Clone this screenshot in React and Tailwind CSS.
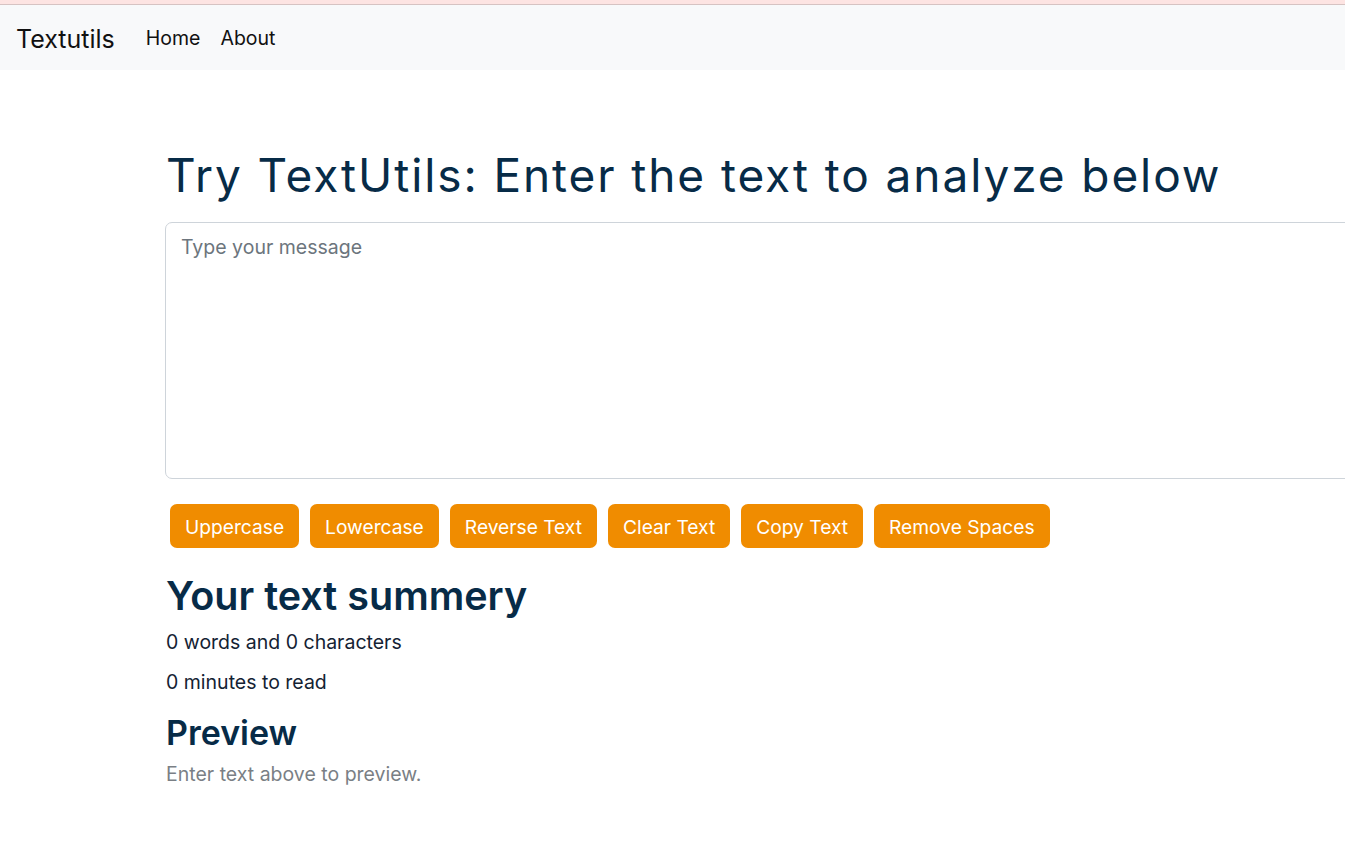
export default function App() {
  const buttons = ["Uppercase", "Lowercase", "Reverse Text", "Clear Text", "Copy Text", "Remove Spaces"];
  return (
    <div className="min-h-screen w-full overflow-hidden bg-white" style={{ fontFamily: "Inter, 'Noto Sans', sans-serif" }}>
      <div className="h-[5px] bg-[#fde4e2] border-b border-[#d6c3c2]"></div>
      <nav className="h-[65px] bg-[#f8f9fa] flex items-center pl-[16px]">
        <span className="text-[25px] leading-[30px] text-[#111] mr-[21px] mt-[2px]">Textutils</span>
        <a className="text-[19.5px] text-[#111] px-[10px] mt-[2px]">Home</a>
        <a className="text-[19.5px] text-[#111] px-[10px] mt-[2px]">About</a>
      </nav>
      <main className="ml-[165px] w-[1300px]">
        <h1 className="text-[46px] leading-[57px] mt-[77px] tracking-[1.9px] text-[#072b47] font-normal pl-[1px]">Try TextUtils: Enter the text to analyze below</h1>
        <textarea
          className="mt-[18px] block w-full h-[257px] border border-[#ced4da] rounded-[7px] px-[15px] py-[10px] text-[19.5px] placeholder:text-[#6c757d] outline-none resize-none"
          placeholder="Type your message"
        ></textarea>
        <div className="mt-[25px] flex pl-[5px] gap-[11px]">
          {buttons.map((b) => (
            <button key={b} className="h-[44px] px-[15px] pt-[2px] rounded-[7px] bg-[#f08c00] text-white text-[19.2px]">{b}</button>
          ))}
        </div>
        <h2 className="mt-[25px] text-[39.5px] leading-[46px] font-semibold text-[#072b47] pl-[1px]">Your text summery</h2>
        <p className="mt-[8px] text-[19.5px] leading-[30px] text-[#142233] pl-[1px]">0 words and 0 characters</p>
        <p className="mt-[10px] text-[19.5px] leading-[30px] text-[#142233] pl-[1px]">0 minutes to read</p>
        <h2 className="mt-[13px] text-[34px] leading-[46px] font-semibold text-[#072b47] pl-[1px]">Preview</h2>
        <p className="mt-[3px] text-[19.5px] leading-[30px] text-[#7a7f85] pl-[1px]">Enter text above to preview.</p>
      </main>
    </div>
  );
}
